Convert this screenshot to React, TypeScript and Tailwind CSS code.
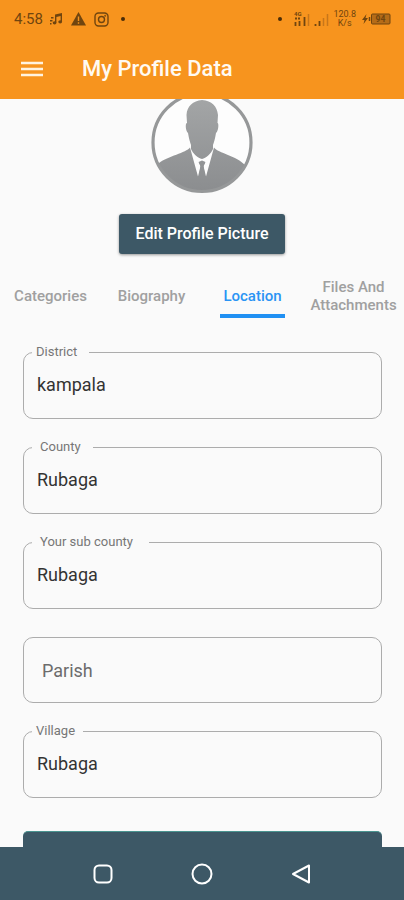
import { useState } from 'react';

type Field = {
  id: string;
  label: string;
  value: string;
  legendClass: string;
};

const FIELDS: Field[] = [
  { id: 'district', label: 'District', value: 'kampala', legendClass: 'pl-1 pr-3' },
  { id: 'county', label: 'County', value: 'Rubaga', legendClass: 'pl-2 pr-3' },
  { id: 'sub-county', label: 'Your sub county', value: 'Rubaga', legendClass: 'pl-2 pr-4' },
  { id: 'parish', label: 'Parish', value: '', legendClass: '' },
  { id: 'village', label: 'Village', value: 'Rubaga', legendClass: 'pl-1 pr-2' },
];

const TABS = ['Categories', 'Biography', 'Location', 'Files And Attachments'];

function StatusBar() {
  return (
    <div className="flex h-[38px] items-center pr-3 pl-[14px] text-[#70450f]">
      <span className="w-9 text-[15px] leading-4">4:58</span>
      <svg className="mr-2" width="13" height="14" viewBox="0 0 13 14" fill="currentColor" aria-hidden="true">
        <path d="M5 2.5 12 1v8.5h-1.4V4L6.4 5v5.5H5z" />
        <ellipse cx="4.6" cy="10.8" rx="1.9" ry="1.6" />
        <ellipse cx="10.2" cy="9.8" rx="1.9" ry="1.6" />
        <path d="M0 8h2.500v1.500H0zM1 5h2.500v1.500H1zM0 11h1.500v1.500H0z" />
      </svg>
      <svg className="mr-2" width="15" height="14" viewBox="0 0 15 14" aria-hidden="true">
        <path d="M7.500 0 15 13.500H0z" fill="currentColor" />
        <path d="M7.500 4.500v4.500M7.500 10.300v1.500" stroke="#f7941e" strokeWidth="1.400" />
      </svg>
      <svg width="15" height="15" viewBox="0 0 15 15" fill="none" stroke="currentColor" strokeWidth="1.400" aria-hidden="true">
        <rect x="1" y="1" width="13" height="13" rx="3.500" />
        <circle cx="7.500" cy="7.500" r="3" />
        <circle cx="11.200" cy="3.800" r="0.300" />
      </svg>
      <span className="ml-3 size-1 rounded-full bg-[#4a2c08]" />
      <span className="mr-3 ml-auto size-1 rounded-full bg-[#4a2c08]" />
      <svg className="mr-1" width="16" height="16" viewBox="0 0 16 16" aria-hidden="true">
        <text x="0" y="5" fontSize="6" fontWeight="700" fontFamily="Roboto, sans-serif" fill="currentColor">4G</text>
        <path d="M1 7.500h2M4 7.500h2M1.500 11v4M5.500 10v5M10.500 6v9" stroke="currentColor" strokeWidth="1.800" />
        <path d="M14.500 3v12" stroke="#c7761a" strokeWidth="1.500" />
      </svg>
      <svg className="mr-1" width="15" height="16" viewBox="0 0 15 16" aria-hidden="true">
        <path d="M1.500 13v2M5.500 10v5" stroke="currentColor" strokeWidth="1.800" />
        <path d="M9.500 7v8M13.500 3v12" stroke="#c7761a" strokeWidth="1.500" />
      </svg>
      <span className="mr-[6px] text-center text-[9px] leading-[9px]">
        120.8
        <br />
        K/s
      </span>
      <svg width="30" height="12" viewBox="0 0 30 12" aria-hidden="true">
        <path d="M4.500 1 0 7h2.500L1.500 11 6 5H3.500z" fill="currentColor" />
        <path d="M7.500 4v4" stroke="currentColor" strokeWidth="1.500" />
        <rect x="9.500" y="1" width="18.500" height="10" rx="1" fill="#b56c18" stroke="currentColor" />
        <text x="13.500" y="9" fontSize="8.500" fontWeight="700" fontFamily="Roboto, sans-serif" fill="#70450f">94</text>
      </svg>
    </div>
  );
}

function Avatar() {
  return (
    <svg className="-mt-[7px]" width="102" height="102" viewBox="0 0 102 102" role="img" aria-label="Profile picture">
      <defs>
        <clipPath id="disc">
          <circle cx="51" cy="50.500" r="49" />
        </clipPath>
        <linearGradient id="tone" gradientUnits="userSpaceOnUse" x1="0" y1="8" x2="0" y2="100">
          <stop offset="0" stopColor="#a3a5a6" />
          <stop offset="1" stopColor="#8b8d8f" />
        </linearGradient>
      </defs>
      <circle cx="51" cy="50.500" r="49" fill="#fdfdfd" />
      <g clipPath="url(#disc)" fill="url(#tone)">
        <path d="M39 55.500C35 61 17 64 8 71V102H94V73C86 64 67 61 63 55.500L55 84.500 52.500 74 54 71 51 69 48 71 49.500 74 47 84.500Z" />
        <path d="M51 8C42 9 36 14 35.500 23L36 31C34 31 34.500 39 37 41C38 47 39 50 40 53V57C42 62 47 66 51 67C55 66 60 62 62 57V53C63 50 64 47 65 41C67.500 39 68 31 66.500 31L67 23C66 14 61 9 51 8Z" />
        <path d="M47.500 70 51 68.500 54.500 70 52.500 74 54 84.500H48L49.500 74Z" />
      </g>
      <circle cx="51" cy="50.500" r="49" fill="none" stroke="#969899" strokeWidth="3.200" />
    </svg>
  );
}

function OutlinedField({ field }: { field: Field }) {
  const [value, setValue] = useState(field.value);
  const input = (
    <input
      id={field.id}
      value={value}
      onChange={(e) => setValue(e.target.value)}
      placeholder={field.value ? undefined : field.label}
      aria-label={field.label}
      className={
        field.value
          ? 'h-8 w-full bg-transparent pl-[13px] text-lg text-[#333333] outline-none'
          : 'h-8 w-full bg-transparent pl-[18px] text-lg text-[#333333] outline-none placeholder:text-[#6c6c6c]'
      }
    />
  );

  if (!field.value) {
    return (
      <div className="mt-2 flex h-[66px] items-center rounded-[10px] border border-[#acacac]">{input}</div>
    );
  }
  return (
    <fieldset className="h-[75px] min-w-0 rounded-[10px] border border-[#acacac]">
      <legend className={`ml-2 h-4 text-[13px] leading-4 text-[#767676] ${field.legendClass}`}>
        <label htmlFor={field.id}>{field.label}</label>
      </legend>
      <div className="pt-2">{input}</div>
    </fieldset>
  );
}

export default function App() {
  const [active, setActive] = useState('Location');
  return (
    <div className="flex h-screen flex-col overflow-hidden bg-[#fafafa] font-[Roboto,sans-serif]">
      <header className="z-10 shrink-0 bg-[#f7941e]">
        <StatusBar />
        <div className="flex h-[61px] items-center pl-[21px]">
          <button type="button" aria-label="Open menu" className="mr-[39px] flex h-8 items-center">
            <svg width="22" height="16" viewBox="0 0 22 16" stroke="#fff3e0" strokeWidth="2.400" aria-hidden="true">
              <path d="M0 2h22M0 8h22M0 14h22" />
            </svg>
          </button>
          <h1 className="text-[22px] leading-7 font-medium text-[#fffaf2]">My Profile Data</h1>
        </div>
      </header>

      <main className="min-h-0 flex-1 overflow-hidden">
        <div className="flex flex-col items-center">
          <Avatar />
          <button
            type="button"
            className="mt-5 h-10 rounded-[3px] bg-[#3d5866] px-[17px] text-base font-medium text-white shadow-[0_1px_3px_rgba(0,0,0,0.4)]"
          >
            Edit Profile Picture
          </button>
        </div>

        <div role="tablist" className="mt-5 grid h-11 grid-cols-4">
          {TABS.map((tab) => (
            <button
              key={tab}
              type="button"
              role="tab"
              aria-selected={tab === active}
              onClick={() => setActive(tab)}
              className={
                tab === active
                  ? 'flex flex-col items-center text-[15px] leading-[18px] font-medium text-[#2a94f4]'
                  : 'flex flex-col items-center text-[15px] leading-[18px] font-medium text-[#a0a0a0]'
              }
            >
              <span className="flex h-10 items-center justify-center pt-1">{tab}</span>
              {tab === active && <span className="h-1 w-[65px] bg-[#2090f3]" />}
            </button>
          ))}
        </div>

        <form className="mt-[26px] mr-[22px] ml-[23px] flex flex-col gap-5" onSubmit={(e) => e.preventDefault()}>
          {FIELDS.map((field) => (
            <OutlinedField key={field.id} field={field} />
          ))}
          <button
            type="submit"
            aria-label="Save location"
            className="mt-[13px] h-12 w-full rounded-[5px] border-t border-[#4a9490] bg-[#3d5866]"
          />
        </form>
      </main>

      <nav className="grid h-[53px] shrink-0 grid-cols-[99px_99px_99px] justify-center bg-[#3d5866]">
        <button type="button" aria-label="Recent apps" className="flex items-center justify-center">
          <svg width="20" height="20" viewBox="0 0 20 20" fill="none" stroke="#fff" strokeWidth="2" aria-hidden="true">
            <rect x="1.500" y="1.500" width="17" height="17" rx="4.500" />
          </svg>
        </button>
        <button type="button" aria-label="Home" className="flex items-center justify-center">
          <svg width="22" height="22" viewBox="0 0 22 22" fill="none" stroke="#fff" strokeWidth="2" aria-hidden="true">
            <circle cx="11" cy="11" r="9.500" />
          </svg>
        </button>
        <button type="button" aria-label="Back" className="flex items-center justify-center">
          <svg width="20" height="20" viewBox="0 0 20 20" fill="none" stroke="#fff" strokeWidth="2" strokeLinejoin="round" aria-hidden="true">
            <path d="M18 1.500v17L2 10z" />
          </svg>
        </button>
      </nav>
    </div>
  );
}
